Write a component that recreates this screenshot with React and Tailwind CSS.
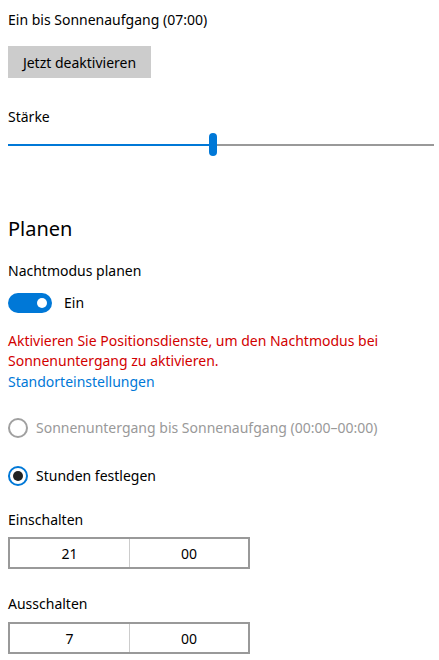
import { useState } from "react";

const font = { fontFamily: '"Segoe UI", "Noto Sans", "Open Sans", sans-serif' };

const TimeBox = ({ hour, minute }) => (
  <div className="flex h-[32px] w-[242px] border-2 border-[#999999] text-[14px] text-black">
    <div className="flex w-[120px] items-center justify-center border-r border-[#cccccc]">{hour}</div>
    <div className="flex flex-1 items-center justify-center">{minute}</div>
  </div>
);

const App = () => {
  const [value] = useState(48.2);
  const [on, setOn] = useState(true);

  return (
    <div className="min-h-[660px] w-[439px] bg-white px-[8px] pt-[10px] text-[14px] text-black" style={font}>
      {/* Status */}
      <div className="leading-[20px]">Ein bis Sonnenaufgang (07:00)</div>

      <button className="mt-[16px] h-[32px] w-[143px] bg-[#cccccc] text-[14px] text-black">
        Jetzt deaktivieren
      </button>

      {/* Slider */}
      <div className="mt-[29px] leading-[20px]">Stärke</div>
      <div className="relative mt-[6px] flex h-[23px] w-[426px] items-center">
        <div className="h-[2px] bg-[#0078d7]" style={{ width: `${value}%` }} />
        <div className="h-[2px] flex-1 bg-[#999999]" />
        <div
          className="absolute top-0 h-[23px] w-[8px] rounded-full bg-[#0078d7]"
          style={{ left: `calc(${value}% - 4px)` }}
        />
      </div>

      {/* Planen */}
      <h2 className="mt-[59px] text-[20px] leading-[28px]">Planen</h2>

      <div className="mt-[18px] leading-[20px]">Nachtmodus planen</div>
      <div className="mt-[12px] flex items-center gap-[12px]">
        <button
          onClick={() => setOn(!on)}
          className="relative h-[20px] w-[44px] rounded-full bg-[#0078d7]"
        >
          <span className="absolute right-[5px] top-[5px] h-[10px] w-[10px] rounded-full bg-white" />
        </button>
        <span className="leading-[20px]">{on ? "Ein" : "Aus"}</span>
      </div>

      <div className="mt-[18px] leading-[20px] text-[#d20000]">
        Aktivieren Sie Positionsdienste, um den Nachtmodus bei
        <br />
        Sonnenuntergang zu aktivieren.
      </div>
      <div className="leading-[21px] text-[#0078d7]">Standorteinstellungen</div>

      {/* Radios */}
      <div className="mt-[26px] flex items-center gap-[8px]">
        <span className="h-[20px] w-[20px] rounded-full border-2 border-[#a0a0a0]" />
        <span className="leading-[20px] text-[#999999]">Sonnenuntergang bis Sonnenaufgang (00:00–00:00)</span>
      </div>
      <div className="mt-[28px] flex items-center gap-[8px]">
        <span className="flex h-[20px] w-[20px] items-center justify-center rounded-full border-2 border-[#0078d7]">
          <span className="h-[10px] w-[10px] rounded-full bg-[#222222]" />
        </span>
        <span className="leading-[20px]">Stunden festlegen</span>
      </div>

      {/* Times */}
      <div className="mt-[24px] leading-[20px]">Einschalten</div>
      <div className="mt-[7px]">
        <TimeBox hour="21" minute="00" />
      </div>

      <div className="mt-[25px] leading-[20px]">Ausschalten</div>
      <div className="mt-[8px]">
        <TimeBox hour="7" minute="00" />
      </div>
    </div>
  );
};

export default App;
